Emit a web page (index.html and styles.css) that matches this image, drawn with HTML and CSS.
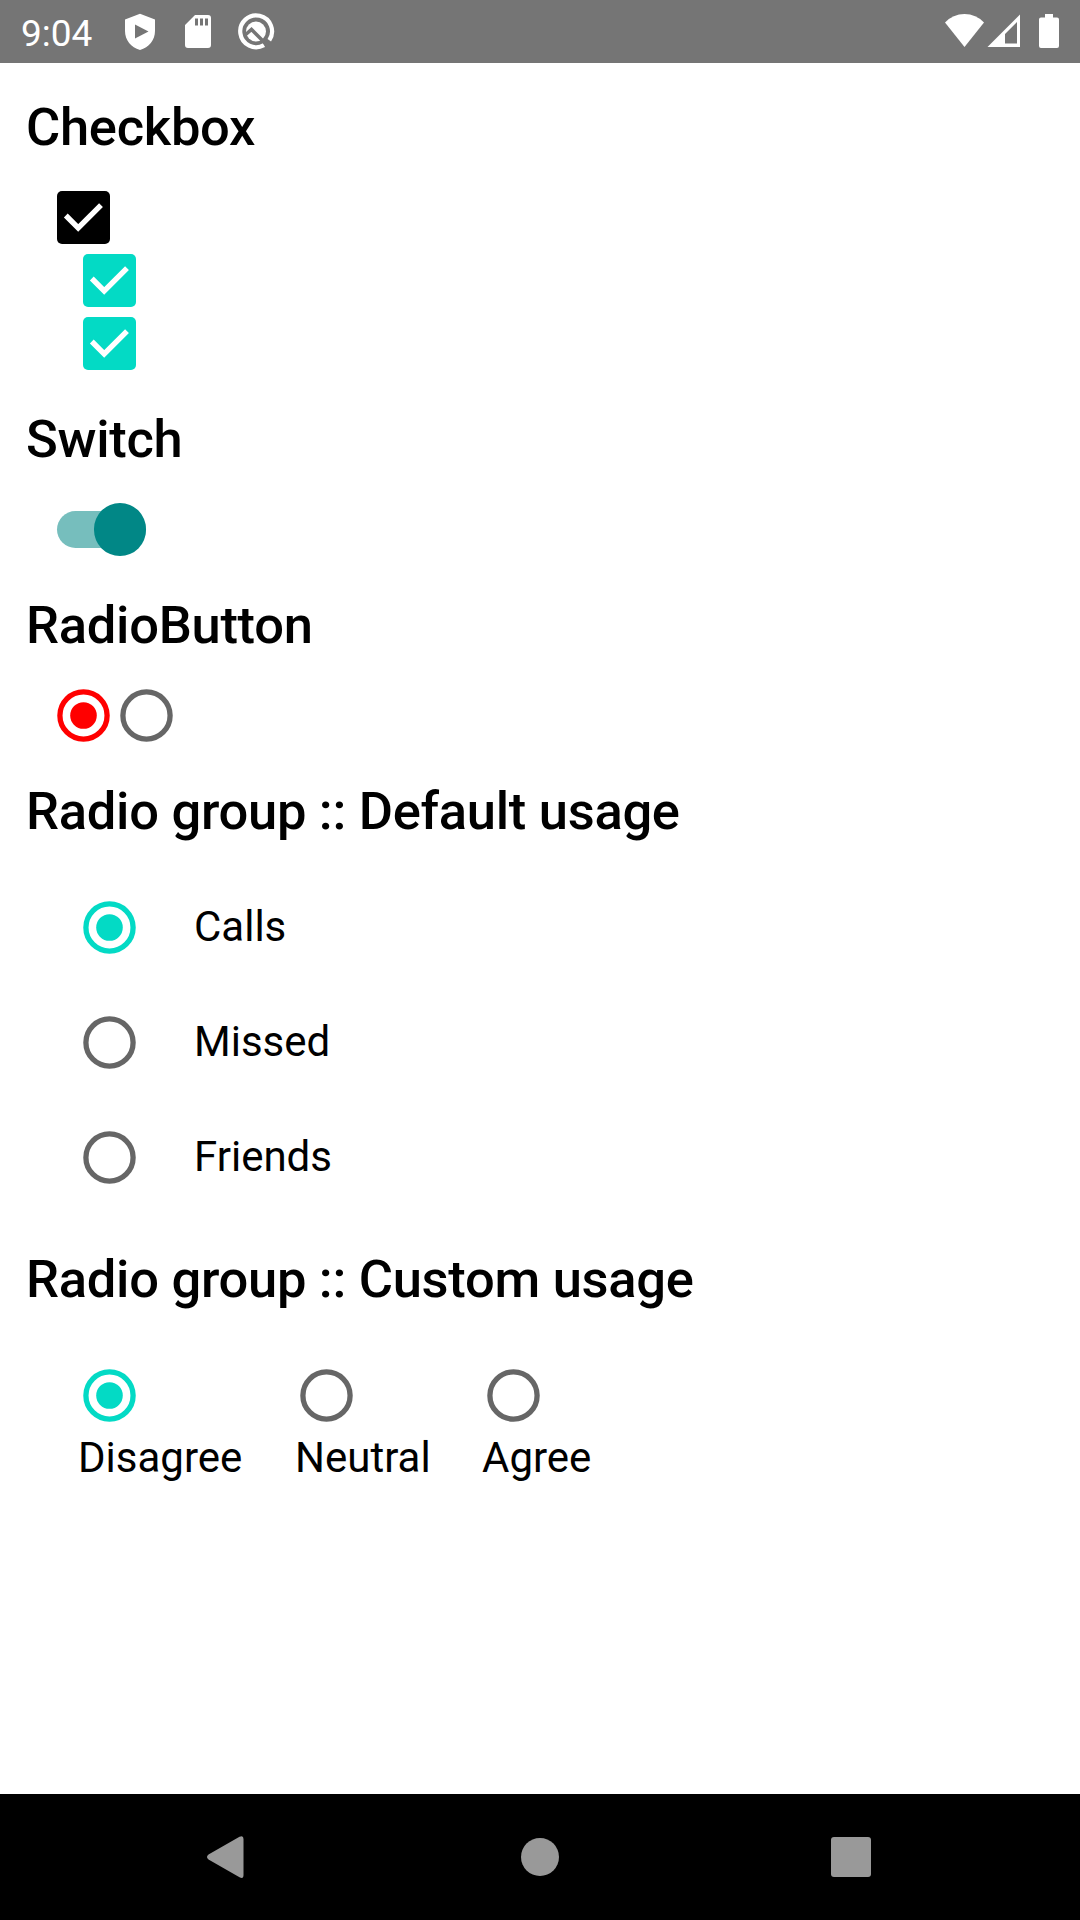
FILE: index.html
```html
<!DOCTYPE html>
<html lang="en">
<head>
<meta charset="utf-8">
<title>Selection controls</title>
<link rel="stylesheet" href="styles.css">
</head>
<body>
<svg width="0" height="0" class="defs">
  <symbol id="check" viewBox="0 0 53 53"><rect width="53" height="53" rx="5" fill="currentColor"/><path d="M8.800 24.500 21.200 37 44 14.200" fill="none" stroke="#fff" stroke-width="5.400"/></symbol>
  <symbol id="radio-on" viewBox="0 0 53 53"><circle cx="26.500" cy="26.500" r="23.600" fill="none" stroke="currentColor" stroke-width="5.300"/><circle cx="26.500" cy="26.500" r="13.300" fill="currentColor"/></symbol>
  <symbol id="radio-off" viewBox="0 0 53 53"><circle cx="26.500" cy="26.500" r="23.600" fill="none" stroke="currentColor" stroke-width="5.300"/></symbol>
</svg>
<div class="screen">
  <header class="status">
    <span class="time">9:04</span>
    <svg class="status-left" viewBox="120 0 160 63" width="160" height="63">
      <path fill="#fff" fill-rule="evenodd" d="M140 13.800 155 19.500V31c0 9-6 16.500-15 19-9-2.500-15-10-15-19V19.500ZM135 24.500V38.500L148.500 31.500Z"/>
      <path fill="#fff" fill-rule="evenodd" d="M195 15H208a3 3 0 0 1 3 3V45a3 3 0 0 1-3 3H188a3 3 0 0 1-3-3V25ZM195 18.500V25.500H198V18.500ZM200 18.500V25.500H203V18.500ZM205 18.500V25.500H208V18.500Z"/>
      <path d="M264 45.100A15.900 15.900 0 1 1 269.300 40.200" fill="none" stroke="#fff" stroke-width="4.200"/>
      <circle cx="256" cy="31.500" r="10" fill="#fff"/>
      <path d="M244 36 251.500 29.500 268 46" fill="none" stroke="#757575" stroke-width="3.500"/>
    </svg>
    <svg class="status-right" viewBox="940 0 125 63" width="125" height="63" fill="#fff">
      <path d="M945 22.500Q953 14 964.500 14T984 22.500L964.500 47Z"/>
      <path fill-rule="evenodd" d="M1020 14.500V47H987.500ZM1017 22 1005 34V43.500H1017Z"/>
      <path d="M1045 14H1053V17.500H1057a2 2 0 0 1 2 2V46a2 2 0 0 1-2 2H1041a2 2 0 0 1-2-2V19.500a2 2 0 0 1 2-2H1045Z"/>
    </svg>
  </header>
  <main class="content">
    <h2>Checkbox</h2>
    <div class="cell"><svg class="control black"><use href="#check"/></svg></div>
    <div class="cell inset"><svg class="control teal"><use href="#check"/></svg></div>
    <div class="cell inset"><svg class="control teal"><use href="#check"/></svg></div>
    <h2>Switch</h2>
    <div class="cell"><div class="switch"><span class="thumb"></span></div></div>
    <h2>RadioButton</h2>
    <div class="cell"><svg class="control red"><use href="#radio-on"/></svg><svg class="control gray"><use href="#radio-off"/></svg></div>
    <h2>Radio group :: Default usage</h2>
    <div class="row"><svg class="control teal"><use href="#radio-on"/></svg><span>Calls</span></div>
    <div class="row"><svg class="control gray"><use href="#radio-off"/></svg><span>Missed</span></div>
    <div class="row"><svg class="control gray"><use href="#radio-off"/></svg><span>Friends</span></div>
    <h2>Radio group :: Custom usage</h2>
    <div class="options">
      <div class="option"><svg class="control teal"><use href="#radio-on"/></svg><span>Disagree</span></div>
      <div class="option"><svg class="control gray"><use href="#radio-off"/></svg><span>Neutral</span></div>
      <div class="option"><svg class="control gray"><use href="#radio-off"/></svg><span>Agree</span></div>
    </div>
  </main>
  <nav class="navbar">
    <svg viewBox="0 0 1080 126" width="1080" height="126" fill="#999">
      <path d="M208.500 60.500 239.500 42.800Q243.500 41 243.500 45V81Q243.500 85.500 239.500 83.200L208.500 65.500Q205.500 63 208.500 60.500Z"/>
      <circle cx="540" cy="63" r="19"/>
      <rect x="831" y="43" width="40" height="40" rx="3"/>
    </svg>
  </nav>
</div>
</body>
</html>
```
FILE: styles.css
```css
body { margin: 0; background: #fff; color: #000; font-family: Roboto, "Liberation Sans", sans-serif; }
svg { display: block; }
.defs { position: absolute; }
.screen { display: flex; flex-direction: column; width: 1080px; height: 1920px; }
.status { display: flex; align-items: center; height: 63px; background: #757575; color: #fff; }
.time { width: 99px; padding-left: 21px; font-size: 37px; line-height: 59px; padding-top: 4px; }
.status-right { margin-left: auto; margin-right: 15px; }
.content { flex: 1; }
h2 { margin: 0; padding: 33px 26px 28px; font-size: 52.5px; line-height: 62px; font-weight: 500; letter-spacing: -0.29px; white-space: nowrap; }
.cell { display: flex; align-items: center; gap: 10px; height: 63px; padding-left: 57px; }
.inset { padding-left: 83px; }
.control { width: 53px; height: 53px; flex: none; }
.black { color: #000; }
.teal { color: #03dac5; }
.red { color: #f00; }
.gray { color: #666; }
.switch { display: flex; align-items: center; justify-content: flex-end; width: 89px; height: 37px; border-radius: 18.5px; background: #76bebd; }
.thumb { width: 52.5px; height: 52.5px; flex: none; border-radius: 50%; background: #018786; }
.row { display: flex; align-items: center; gap: 58px; height: 115px; padding-left: 83px; font-size: 42px; line-height: 50px; }
.row span { padding-bottom: 2px; }
.options { display: flex; gap: 52px; padding: 31px 0 0 78px; font-size: 42px; line-height: 50px; }
.option { display: flex; flex-direction: column; gap: 11px; }
.option:first-child { width: 165px; }
.option:nth-child(2) { width: 135px; }
.option .control { margin-left: 5px; }
.navbar { height: 126px; background: #000; }
```
